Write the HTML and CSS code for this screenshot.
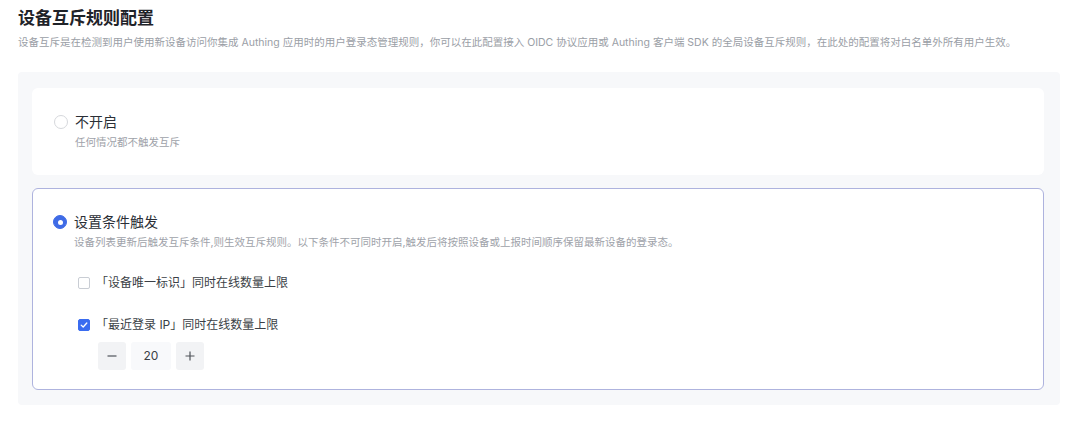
FILE: index.html
```html
<!DOCTYPE html>
<html lang="zh-CN">
<head>
  <meta charset="UTF-8">
  <meta name="viewport" content="width=device-width, initial-scale=1.0">
  <title>设备互斥规则配置</title>
  <link rel="stylesheet" href="styles.css">
</head>
<body>
  <div class="page">
    <h1 class="title">设备互斥规则配置</h1>
    <p class="intro">设备互斥是在检测到用户使用新设备访问你集成 Authing 应用时的用户登录态管理规则，你可以在此配置接入 OIDC 协议应用或 Authing 客户端 SDK 的全局设备互斥规则，在此处的配置将对白名单外所有用户生效。</p>

    <div class="rule-box">
      <!-- option: off -->
      <div class="option-card">
        <div class="option-head">
          <span class="radio"></span>
          <span class="option-label">不开启</span>
        </div>
        <p class="option-desc">任何情况都不触发互斥</p>
      </div>

      <!-- option: conditional -->
      <div class="option-card selected">
        <div class="option-head">
          <span class="radio checked"></span>
          <span class="option-label">设置条件触发</span>
        </div>
        <p class="option-desc">设备列表更新后触发互斥条件,则生效互斥规则。以下条件不可同时开启,触发后将按照设备或上报时间顺序保留最新设备的登录态。</p>

        <div class="conditions">
          <label class="check-row">
            <span class="checkbox"></span>
            <span class="check-text">「设备唯一标识」同时在线数量上限</span>
          </label>
          <label class="check-row">
            <span class="checkbox checked">
              <svg width="8" height="8" viewBox="0 0 8 8"><path d="M1.2 4.1 L3.2 6 L6.8 2" fill="none" stroke="#fff" stroke-width="1.3" stroke-linecap="round" stroke-linejoin="round"/></svg>
            </span>
            <span class="check-text">「最近登录 IP」同时在线数量上限</span>
          </label>
          <div class="stepper">
            <button class="step-btn">
              <svg width="10" height="10" viewBox="0 0 10 10"><path d="M0.5 5 H9.5" stroke="#4e5359" stroke-width="1.2"/></svg>
            </button>
            <span class="step-value">20</span>
            <button class="step-btn">
              <svg width="10" height="10" viewBox="0 0 10 10"><path d="M0.5 5 H9.5 M5 0.5 V9.5" stroke="#4e5359" stroke-width="1.2"/></svg>
            </button>
          </div>
        </div>
      </div>
    </div>
  </div>
</body>
</html>
```

FILE: styles.css
```css
* {
  box-sizing: border-box;
  margin: 0;
  padding: 0;
}

body {
  background: #ffffff;
  color: #1d2129;
  font-family: 'Inter', 'Noto Sans CJK SC', sans-serif;
}

.page {
  padding: 6px 20px 0 18px;
}

.title {
  font-size: 17px;
  line-height: 24px;
  font-weight: 600;
  color: #1f2329;
}

.intro {
  margin-top: 4px;
  font-size: 10.5px;
  line-height: 18px;
  color: #9a9ea6;
  white-space: nowrap;
}

.rule-box {
  margin-top: 20px;
  width: 1042px;
  background: #f7f8fa;
  border-radius: 4px;
  padding: 16px 16px 15px 14px;
  display: flex;
  flex-direction: column;
  gap: 13px;
}

.option-card {
  background: #ffffff;
  border-radius: 6px;
  padding: 23px 21px;
  border: 1px solid transparent;
}

.option-card.selected {
  border-color: #aeb3de;
  padding: 23px 20px 19px;
}

.option-head {
  display: flex;
  align-items: center;
  gap: 7px;
  height: 20px;
}

.radio {
  width: 14px;
  height: 14px;
  border-radius: 50%;
  border: 1px solid #d6d8dc;
  background: #ffffff;
  position: relative;
  flex-shrink: 0;
}

.radio.checked {
  border-color: #3f6be6;
  background: #3f6be6;
}

.radio.checked::after {
  content: '';
  position: absolute;
  top: 50%;
  left: 50%;
  width: 5px;
  height: 5px;
  margin: -2.5px 0 0 -2.5px;
  border-radius: 50%;
  background: #ffffff;
}

.option-label {
  font-size: 14px;
  line-height: 20px;
  color: #2b2f36;
}

.option-desc {
  margin-top: 3px;
  padding-left: 21px;
  font-size: 10.5px;
  line-height: 16px;
  color: #9ea2a9;
}

.conditions {
  padding-left: 25px;
  margin-top: 22px;
}

.check-row {
  display: flex;
  align-items: center;
  gap: 6px;
  height: 20px;
}

.check-row + .check-row {
  margin-top: 22px;
}

.checkbox {
  width: 12px;
  height: 12px;
  border: 1px solid #c9cdd4;
  border-radius: 2px;
  background: #ffffff;
  display: flex;
  align-items: center;
  justify-content: center;
}

.checkbox.checked {
  background: #3a6cf0;
  border-color: #3a6cf0;
}

.check-text {
  font-size: 12px;
  line-height: 20px;
  color: #3b3f46;
}

.stepper {
  margin-top: 7px;
  margin-left: 20px;
  display: flex;
  gap: 5px;
}

.step-btn {
  width: 28px;
  height: 28px;
  border: none;
  border-radius: 3px;
  background: #f2f3f5;
  display: flex;
  align-items: center;
  justify-content: center;
}

.step-value {
  width: 40px;
  height: 28px;
  border-radius: 3px;
  background: #f8f9fb;
  font-size: 12px;
  line-height: 28px;
  text-align: center;
  color: #3b3f46;
}
```
